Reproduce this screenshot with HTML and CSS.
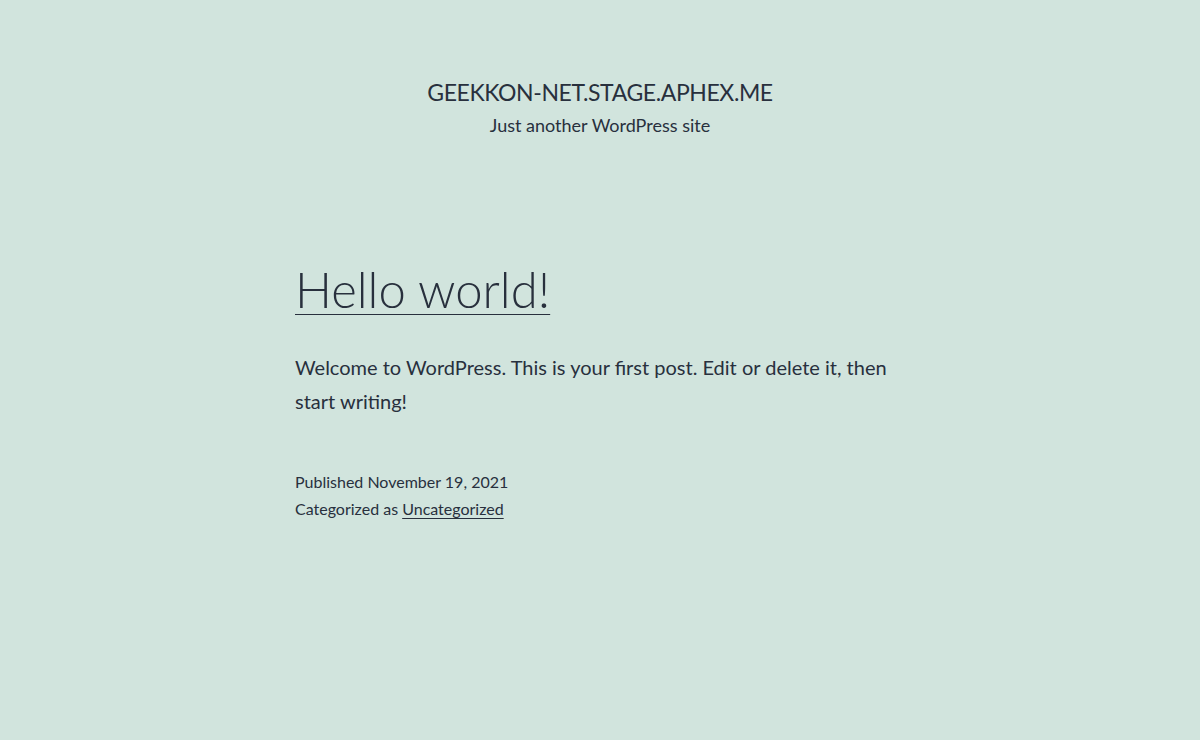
FILE: index.html
```html
<!DOCTYPE html>
<html lang="en">
<head>
    <meta charset="UTF-8">
    <meta name="viewport" content="width=device-width, initial-scale=1.0">
    <title>geekkon-net.stage.aphex.me</title>
    <link rel="stylesheet" href="styles.css">
</head>
<body>

<header class="site-header">
    <p class="site-title">geekkon-net.stage.aphex.me</p>
    <p class="site-description">Just another WordPress site</p>
</header>

<main class="site-main">
    <article class="post">
        <h2 class="entry-title"><a href="#">Hello world!</a></h2>
        <div class="entry-content">
            <p>Welcome to WordPress. This is your first post. Edit or delete it, then start writing!</p>
        </div>
        <footer class="entry-footer">
            <span class="posted-on">Published November 19, 2021</span>
            <span class="cat-links">Categorized as <a href="#">Uncategorized</a></span>
        </footer>
    </article>
</main>

</body>
</html>
```
FILE: styles.css
```css
body { margin: 0; background-color: #d1e4dd; color: #28303d; font-family: Lato, "Liberation Sans", sans-serif; }
a { color: #28303d; text-decoration: underline; text-decoration-thickness: 1px; text-underline-offset: 3px; }
.site-header { padding-top: 78px; text-align: center; }
.site-title { margin: 0; font-size: 23px; line-height: 1.3; letter-spacing: -0.4px; text-transform: uppercase; }
.site-description { margin: 5px 0 0; font-size: 18px; line-height: 1.4; }
.site-main { width: 610px; margin: 0 auto; padding-top: 120px; }
.entry-title { margin: 0; font-size: 49px; font-weight: 300; line-height: 1.3; }
.entry-title a { text-underline-offset: 6px; }
.entry-content p { margin: 28px 0 0; font-size: 20px; line-height: 1.7; }
.entry-footer { margin-top: 50px; font-size: 16px; line-height: 27px; }
.entry-footer span { display: block; }
```
